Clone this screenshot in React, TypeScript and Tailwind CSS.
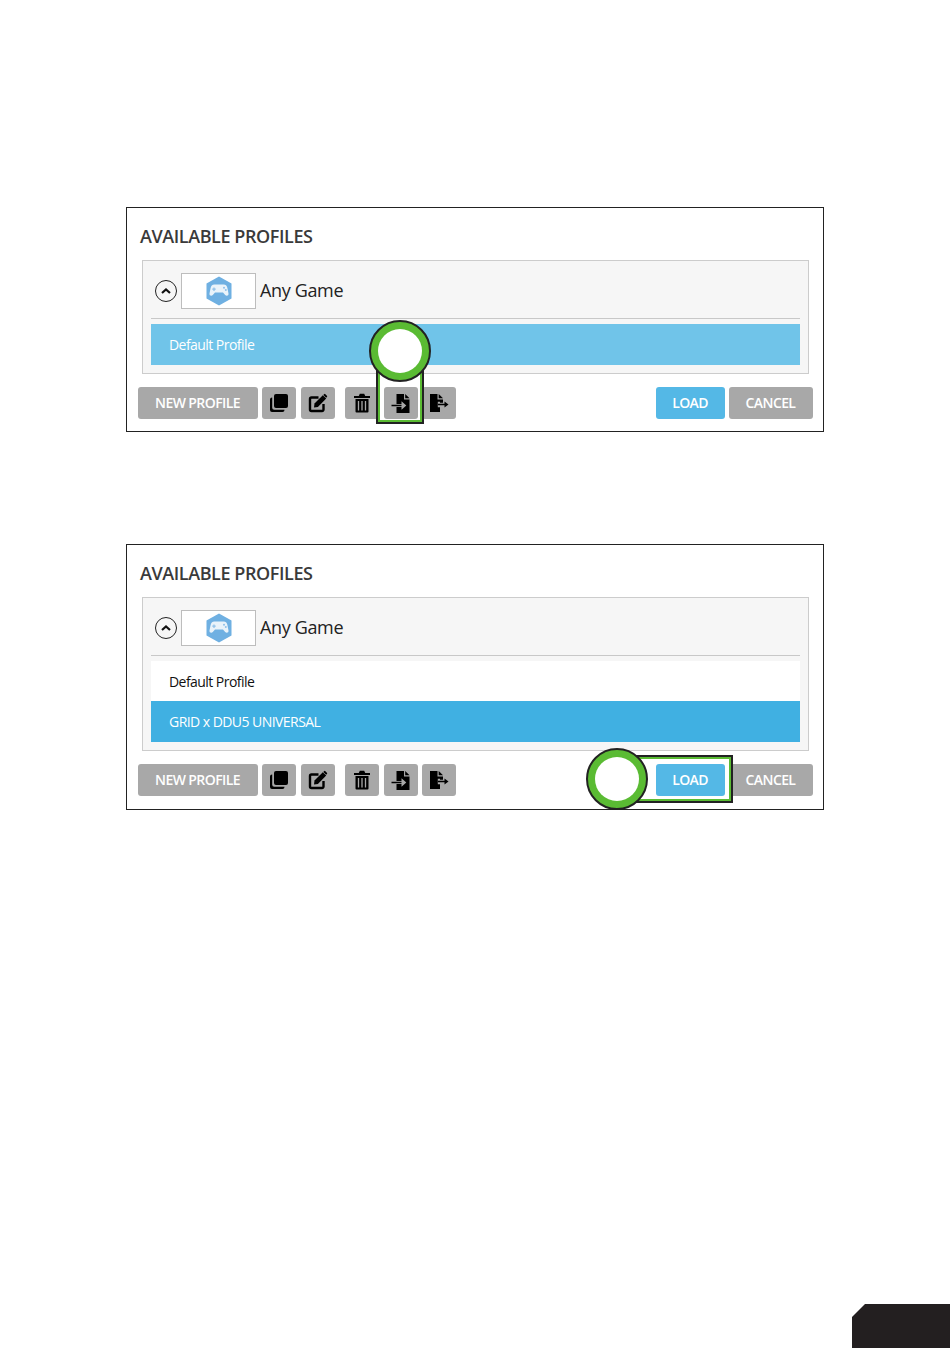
import React from "react";

const font = { fontFamily: '"Open Sans", "Liberation Sans", sans-serif' };

function Copy() {
  return (
    <svg width="20" height="20" viewBox="0 0 20 20">
      <rect x="5" y="1" width="14" height="14" rx="2" fill="#000" />
      <path d="M3.200 4.500H3a2 2 0 0 0-2 2V17a2 2 0 0 0 2 2h10.500a2 2 0 0 0 2-2v-.3H5.200a2 2 0 0 1-2-2z" fill="#000" />
    </svg>
  );
}
function Edit() {
  return (
    <svg width="20" height="20" viewBox="0 0 20 20">
      <path d="M10.500 4.500H3.500A1.500 1.500 0 0 0 2 6v10.500A1.500 1.500 0 0 0 3.500 18H14a1.500 1.500 0 0 0 1.500-1.500V11" fill="none" stroke="#000" strokeWidth="2.400" />
      <path d="M6.500 10.500 14.800 2.200l3.400 3.400-8.300 8.300-3.900.5z" fill="#000" />
      <path d="M16 1.200a1 1 0 0 1 1.400 0l1.500 1.500a1 1 0 0 1 0 1.400l-.7.700-2.900-2.900z" fill="#000" />
    </svg>
  );
}
function Trash() {
  return (
    <svg width="18" height="20" viewBox="0 0 18 20">
      <path d="M1 3h16v1.900H1zM5.800 3 6.800.8h4.400L12.200 3z" fill="#000" />
      <path d="M2.500 6h13v12.500a1 1 0 0 1-1 1h-11a1 1 0 0 1-1-1z" fill="#000" />
      <path d="M5.500 8v9.500M9 8v9.500M12.500 8v9.500" stroke="#a8a8a8" strokeWidth="1.300" />
    </svg>
  );
}
function Import() {
  return (
    <svg width="20" height="21" viewBox="0 0 20 21">
      <path d="M5.500 1h7.500v5.500h5.500V20h-13v-6h5v2.800l4.800-4.300-4.800-4.300V11h-5z" fill="#000" />
      <path d="M14.200 1v4.300h4.300z" fill="#000" />
      <path d="M0.500 12.500h10" stroke="#000" strokeWidth="1.500" />
    </svg>
  );
}
function Export() {
  return (
    <svg width="20" height="20" viewBox="0 0 20 20">
      <path d="M1 1h7.500v5.500H14v3.300h-3V8.800H8.800v5.400H11V19H1z" fill="#000" />
      <path d="M9.700 1v4.300H14z" fill="#000" />
      <path d="M9 11.500h7" stroke="#000" strokeWidth="1.500" />
      <path d="M15.500 8.500 19.500 11.500l-4 3z" fill="#000" />
    </svg>
  );
}
function Chevron() {
  return (
    <span className="flex h-[22px] w-[22px] shrink-0 items-center justify-center rounded-full border-[1.5px] border-[#222]">
      <svg width="12" height="8" viewBox="0 0 12 8">
        <path d="M2 6 6 2.500 10 6" fill="none" stroke="#111" strokeWidth="2.200" />
      </svg>
    </span>
  );
}
function GameLogo() {
  return (
    <svg width="26" height="30" viewBox="0 0 26 30">
      <path d="M13 0.500 25.500 7.500v15L13 29.500 0.500 22.500v-15z" fill="#6fb0e2" />
      <path d="M8.500 8.500h9c2.500 0 3.500 1.500 4 4l1 5c.3 2.200-2 3-3.300 1.500l-2.200-2.500H9l-2.200 2.500c-1.300 1.500-3.600.7-3.300-1.500l1-5c.5-2.500 1.500-4 4-4z" fill="#eaf3fa" />
      <path d="M8 11.500v3.400M6.300 13.200h3.400" stroke="#8fc0e8" strokeWidth="1.200" />
      <circle cx="18" cy="11.800" r="1" fill="#8fc0e8" />
      <circle cx="19.800" cy="14" r="1" fill="#8fc0e8" />
    </svg>
  );
}

function TextBtn({ w, blue, children }: { w: string; blue?: boolean; children: React.ReactNode }) {
  return (
    <span
      className={`flex h-8 ${w} items-center justify-center rounded-[3px] pb-[1px] pr-[1px] text-[14px] font-semibold tracking-[-0.6px] text-white ${blue ? "bg-[#54b8e6]" : "bg-[#a8a8a8]"}`}
    >
      {children}
    </span>
  );
}
function IconBtn({ className, children }: { className?: string; children: React.ReactNode }) {
  return (
    <span className={`flex h-8 w-[34px] items-center justify-center rounded-[3px] bg-[#a8a8a8] ${className ?? ""}`}>
      {children}
    </span>
  );
}

function Panel({ children }: { children: React.ReactNode }) {
  return (
    <section className="relative ml-[126px] w-[698px] border border-[#222] bg-white pl-[11px] pr-[10px]">
      <h2 className="pl-[2px] pt-[16px] text-[18px] font-semibold leading-[24px] tracking-[-0.42px] text-[#3a3a3a]">
        AVAILABLE PROFILES
      </h2>
      {children}
    </section>
  );
}

function ProfileBox({ children }: { children: React.ReactNode }) {
  return (
    <div className="mx-[4px] mt-[12px] border-[1.5px] border-[#cccccc] bg-[#f6f6f6] px-[8px] pb-[8px]">
      <div className="flex h-[58px] items-center border-b-[1.5px] border-[#c8c8c8] pl-[4px] pt-[3px]">
        <Chevron />
        <span className="ml-[4px] flex h-[36px] w-[75px] items-center justify-center border border-[#bdbdbd] bg-white">
          <GameLogo />
        </span>
        <span className="mb-[2px] ml-[4px] text-[18px] font-normal leading-none tracking-[-0.35px] text-[#222]">Any Game</span>
      </div>
      <div className="mt-[5px]">{children}</div>
    </div>
  );
}

function Row({ h, bg, color, children }: { h: string; bg: string; color: string; children: React.ReactNode }) {
  return (
    <div className={`flex ${h} items-center pl-[18px] text-[14px] tracking-[-0.55px] ${bg} ${color}`}>{children}</div>
  );
}

function Buttons({ pb }: { pb: string }) {
  return (
    <div className={`mt-[13px] flex items-center ${pb}`}>
      <TextBtn w="w-[120px]">NEW PROFILE</TextBtn>
      <IconBtn className="ml-[4px]"><Copy /></IconBtn>
      <IconBtn className="ml-[5px]"><Edit /></IconBtn>
      <IconBtn className="ml-[10px]"><Trash /></IconBtn>
      <IconBtn className="ml-[5px]"><Import /></IconBtn>
      <IconBtn className="ml-[4px]"><Export /></IconBtn>
      <span className="ml-auto" />
      <TextBtn w="w-[69px]" blue>LOAD</TextBtn>
      <span className="ml-[4px]" />
      <TextBtn w="w-[84px]">CANCEL</TextBtn>
    </div>
  );
}

function Circle({ className }: { className: string }) {
  return (
    <span className={`absolute h-[62px] w-[62px] rounded-full border-[2px] border-[#222] bg-[#5abb33] ${className}`}>
      <span className="absolute inset-[7px] rounded-full bg-white" />
    </span>
  );
}

export default function App() {
  return (
    <div className="relative h-[1348px] w-[950px] overflow-hidden bg-white" style={font}>
      <div className="pt-[207px]">
        <Panel>
          <ProfileBox>
            <Row h="h-[41px]" bg="bg-[#70c4e9]" color="text-white">Default Profile</Row>
          </ProfileBox>
          <Buttons pb="pb-[12px]" />
          <span className="absolute left-[249px] top-[160px] h-[56px] w-[48px] border-[2px] border-[#222] shadow-[inset_0_0_0_2px_#5abb33]" />
          <Circle className="left-[242px] top-[112px]" />
        </Panel>
        <div className="h-[112px]" />
        <Panel>
          <ProfileBox>
            <Row h="h-[40px]" bg="bg-white" color="text-[#111]">Default Profile</Row>
            <Row h="h-[41px]" bg="bg-[#40b0e2]" color="text-white">GRID x DDU5 UNIVERSAL</Row>
          </ProfileBox>
          <Buttons pb="pb-[13px]" />
          <span className="absolute left-[505px] top-[210px] h-[48px] w-[101px] border-[2px] border-[#222] shadow-[inset_0_0_0_2px_#5abb33]" />
          <Circle className="left-[459px] top-[203px]" />
        </Panel>
      </div>
      <div className="absolute bottom-0 right-0 h-[44px] w-[98px] bg-[#231f20] [clip-path:polygon(13px_0,100%_0,100%_100%,0_100%,0_13px)]" />
    </div>
  );
}
